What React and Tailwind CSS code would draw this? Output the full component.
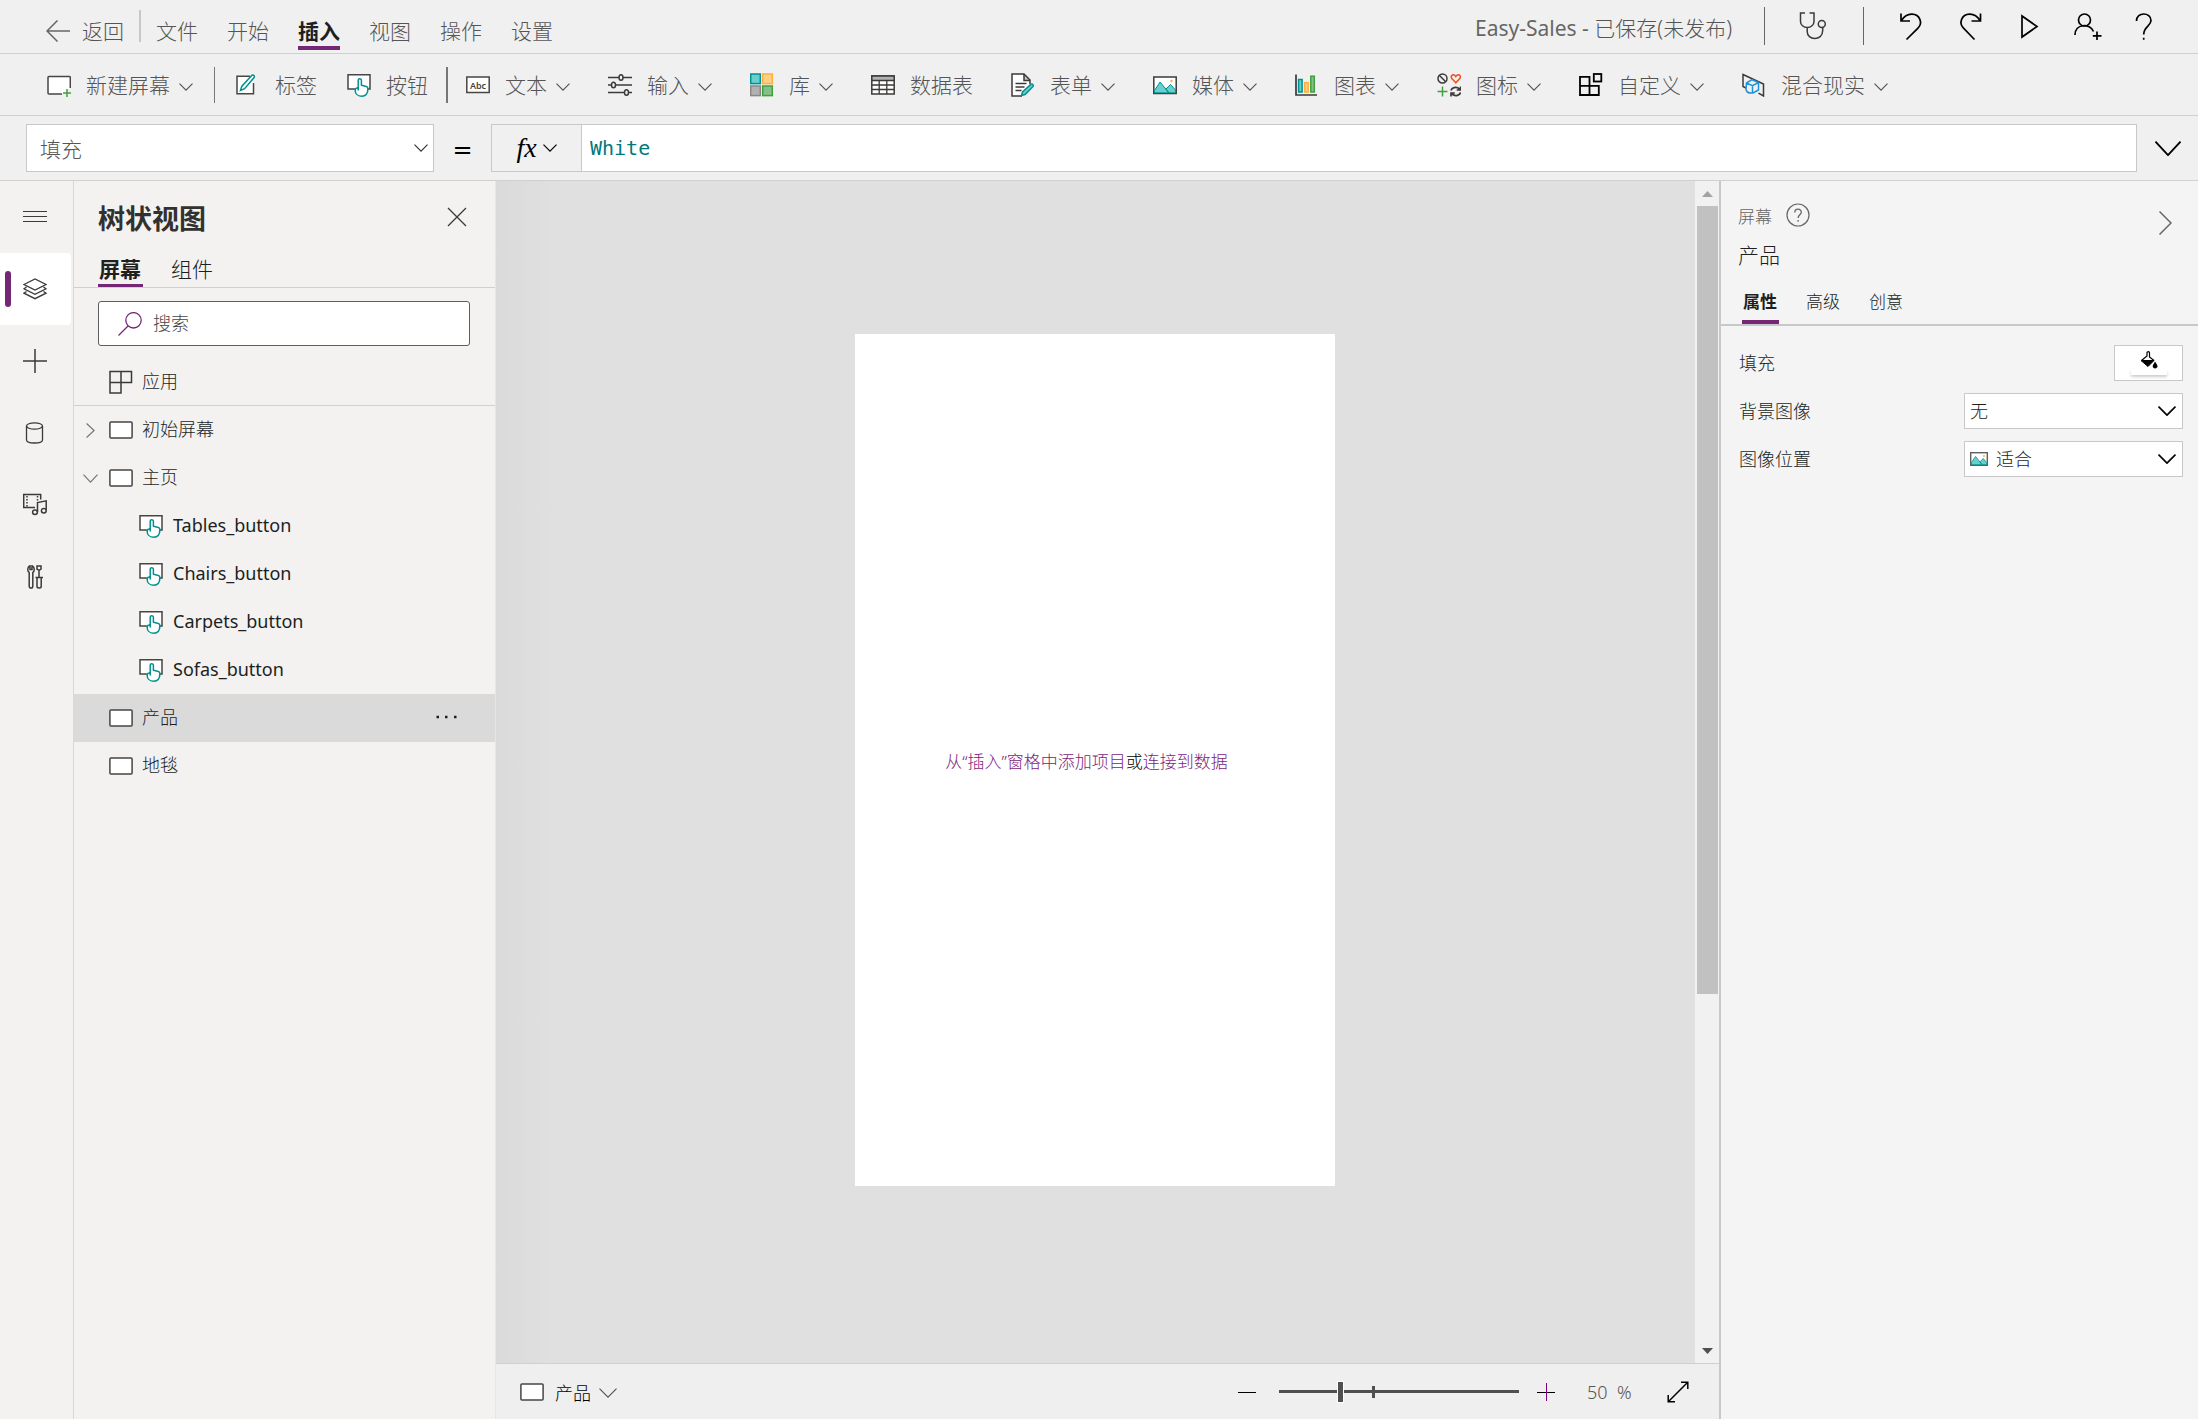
import React from 'react';

/* ---------- icons ---------- */

function Icon({ size = 24, children, className = '' }) {
  return (
    <svg
      width={size}
      height={size}
      viewBox={`0 0 ${size} ${size}`}
      fill="none"
      stroke="#3b3a39"
      strokeWidth="1.5"
      className={`shrink-0 ${className}`}
      aria-hidden="true"
    >
      {children}
    </svg>
  );
}

function Chevron({ className = '', width = 14, height = 8, stroke = 1.2 }) {
  return (
    <svg
      width={width}
      height={height}
      viewBox={`0 0 ${width} ${height}`}
      fill="none"
      stroke="currentColor"
      strokeWidth={stroke}
      className={`shrink-0 ${className}`}
      aria-hidden="true"
    >
      <path d={`M0.5 0.6L${width / 2} ${height - 0.9}L${width - 0.5} 0.6`} />
    </svg>
  );
}

const HAND =
  'M11.2 15.2V7.300a1.600 1.600 0 0 1 3.200 0v5l5 1.200c1.100.3 1.500 1 1.500 2 0 4.600-1.900 7.700-6.300 7.700s-6.400-3-6.400-6c0-1.700 1.200-2.500 3-2z';

function ScreenIcon() {
  return (
    <Icon>
      <rect x="0.9" y="3.9" width="22.2" height="16.2" rx="1" fill="#fff" stroke="#484644" />
    </Icon>
  );
}

function ButtonIcon() {
  return (
    <Icon>
      <path d="M8 16H1V1.800h22V16h-2" fill="#fff" stroke="#484644" />
      <path d={HAND} fill="#fff" stroke="#00908f" strokeLinejoin="round" />
      <path d="M11.2 14v3.500" stroke="#00908f" />
    </Icon>
  );
}

function NewScreenIcon() {
  return (
    <Icon>
      <path d="M15 21H2a1 1 0 0 1-1-1V4.500a1 1 0 0 1 1-1h20.500a.8.8 0 0 1 .8.8V15" fill="#fff" stroke="#484644" />
      <path d="M20 16v8M16 20h8" stroke="#3fa142" />
    </Icon>
  );
}

function LabelIcon() {
  return (
    <Icon>
      <path d="M14 3.200H1v17.500h16.500V10" fill="#fff" stroke="#484644" />
      <path d="M4.500 17.500l1.200-4L15.500 2.700a1.600 1.600 0 0 1 2.600 1.900L8.600 15.700z" fill="#fff" stroke="#00908f" />
    </Icon>
  );
}

function AbcIcon() {
  return (
    <Icon>
      <rect x="0.8" y="4" width="22.4" height="15.500" fill="#fff" stroke="#484644" />
      <text x="12" y="15.500" textAnchor="middle" className="font-['Noto_Sans']" fontSize="9" fontWeight="600" fill="#484644" stroke="none">
        Abc
      </text>
    </Icon>
  );
}

function InputIcon() {
  return (
    <Icon>
      <path d="M0 4.500h11M15 4.500h9M0 12h3.500M7.500 12H24M0 19.500h16.500M20.500 19.500H24" />
      <ellipse cx="13" cy="4.500" rx="2" ry="2.800" />
      <ellipse cx="5.500" cy="12" rx="2" ry="2.800" />
      <ellipse cx="18.500" cy="19.500" rx="2" ry="2.800" />
    </Icon>
  );
}

function GalleryIcon() {
  return (
    <Icon>
      <rect x="0.7" y="1" width="9.600" height="9.600" fill="#69cfce" stroke="#00908f" />
      <rect x="12.700" y="1" width="9.600" height="9.600" fill="#fdd084" stroke="#fbb040" />
      <rect x="0.7" y="13" width="9.600" height="9.600" fill="#b1b1b1" stroke="#8a8886" />
      <rect x="12.700" y="13" width="9.600" height="9.600" fill="#85c187" stroke="#3fa142" />
    </Icon>
  );
}

function TableIcon() {
  return (
    <Icon>
      <rect x="0.8" y="3" width="22.400" height="18" fill="#fff" />
      <rect x="0.8" y="3" width="22.400" height="4.500" fill="#b1b1b1" />
      <path d="M1 12h22M1 16.500h22M8.200 7.500V21M15.800 7.500V21" strokeWidth="1.300" />
    </Icon>
  );
}

function FormIcon() {
  return (
    <Icon>
      <path d="M11 23H1V1h12l6 6v4" fill="#fff" />
      <path d="M13 1v6.500h6" fill="#484644" fillOpacity="0.3" />
      <path d="M4.500 10.500h11M4.500 14h9M4.500 17.500h6" />
      <path d="M10.500 22.500l1-3.500 8.300-7.600c1.500-1 3.300.5 2.200 2.100L14 21.500z" fill="#69cfce" stroke="#00908f" />
    </Icon>
  );
}

function MediaIcon() {
  return (
    <Icon>
      <rect x="0.8" y="4" width="22.400" height="16.500" fill="#fff" />
      <path d="M1.500 19.800V17.500L7 9l9 10.800zM13 16l4.500-4.500 5 5.500v2.800h-7z" fill="#69cfce" stroke="#00908f" strokeWidth="1" />
      <circle cx="18.500" cy="8" r="1.200" fill="#fbb040" stroke="none" />
    </Icon>
  );
}

function ChartIcon() {
  return (
    <Icon>
      <path d="M1 1.500V22h21" strokeWidth="1.700" />
      <rect x="3.600" y="6.500" width="3.500" height="12.500" fill="#69cfce" stroke="#00908f" />
      <rect x="9.700" y="9.700" width="3.500" height="9.300" fill="#fdd084" stroke="#fbb040" />
      <rect x="15.800" y="3.200" width="3.500" height="15.800" fill="#85c187" stroke="#3fa142" />
    </Icon>
  );
}

function SymbolsIcon() {
  return (
    <Icon>
      <circle cx="5.500" cy="5.500" r="4.500" />
      <path d="M2.500 2.500l6 6" />
      <path d="M18.800 9.800l-4-4.200c-1.500-2 .3-4.300 2.300-3.600.8.3 1.300.8 1.700 1.500.4-.7.900-1.200 1.700-1.500 2-.7 3.800 1.600 2.300 3.600z" stroke="#f2511b" />
      <path d="M5.500 13.500v10M0.500 18.500h10" stroke="#3fa142" />
      <path d="M14 17.500c.5-2.500 5-4.500 8.500-1.500M23.500 13.500V17h-3.800M23.500 19.500c-.5 2.500-5 4.500-8.500 1.500M14 23.500V20h3.800" strokeWidth="1.700" />
    </Icon>
  );
}

function CustomIcon() {
  return (
    <Icon>
      <path d="M1 3.800h9.500v9h9.300V22H1zM1 12.800h9.500V22" stroke="#000" strokeWidth="1.800" />
      <rect x="14.800" y="1" width="7.500" height="7.500" stroke="#000" strokeWidth="1.800" />
    </Icon>
  );
}

function RealityIcon() {
  return (
    <Icon>
      <path d="M4 15l-3-1.500V1.500l20.500 9.500v12l-5-2.800" />
      <path d="M4.500 10l5.500-3.300 6.500 2.800v7.500l-5.500 3c-4 .5-6.500-1-7-3.500zM4.500 10l6 2.700 6-3.200M10.500 12.700v7" stroke="#2492d8" />
    </Icon>
  );
}

/* ---------- data ---------- */

const MENU = ['文件', '开始', '插入', '视图', '操作', '设置'];

const INSERT_ITEMS = [
  { label: '文本', icon: AbcIcon, menu: true },
  { label: '输入', icon: InputIcon, menu: true },
  { label: '库', icon: GalleryIcon, menu: true },
  { label: '数据表', icon: TableIcon },
  { label: '表单', icon: FormIcon, menu: true },
  { label: '媒体', icon: MediaIcon, menu: true },
  { label: '图表', icon: ChartIcon, menu: true },
  { label: '图标', icon: SymbolsIcon, menu: true },
  { label: '自定义', icon: CustomIcon, menu: true },
  { label: '混合现实', icon: RealityIcon, menu: true },
];

const TREE = [
  { label: '初始屏幕', open: false },
  { label: '主页', open: true },
  { label: 'Tables_button', child: true },
  { label: 'Chairs_button', child: true },
  { label: 'Carpets_button', child: true },
  { label: 'Sofas_button', child: true },
  { label: '产品', selected: true },
  { label: '地毯' },
];

/* ---------- header ---------- */

function TopBar() {
  return (
    <header className="flex h-[54px] shrink-0 border-b border-[#d0d0d0] pl-[46px] pr-[37px] text-[21px] leading-[30px] text-[#555]">
      <button className="flex h-[46px] items-center gap-3 pt-4">
        <svg width="24" height="22" viewBox="0 0 24 22" fill="none" stroke="#666" strokeWidth="1.500" aria-hidden="true">
          <path d="M24 11H1M11.500 0.500L1 11l10.500 10.500" />
        </svg>
        返回
      </button>
      <div className="ml-[15px] mt-2.5 h-8 w-0.5 bg-[#c8c8c8]" />
      <nav className="ml-[15px] flex gap-[29px]">
        {MENU.map((item) => (
          <button
            key={item}
            className={
              item === '插入'
                ? 'h-[50px] border-b-4 border-[#742774] pt-4 font-bold text-[#201f1e]'
                : 'h-[50px] border-b-4 border-transparent pt-4'
            }
          >
            {item}
          </button>
        ))}
      </nav>

      <div className="ml-auto flex h-[52px] items-center">
        <span className="pt-1">
          <span className="font-normal text-[#666]">Easy-Sales - </span>已保存(未发布)
        </span>
        <div className="ml-8 h-[38px] w-px bg-[#666]" />
        <button className="ml-[34px]" aria-label="应用检查器">
          <Icon size={28}>
            <path d="M6 1H1.500v8.500a6.700 6 0 0 0 13.500 0V1h-4.500M8.200 15.500v4c0 4.500 3.500 7 7.500 7s8-2.500 8-8v-3" />
            <circle cx="22.800" cy="12" r="3.500" />
          </Icon>
        </button>
        <div className="ml-9 h-[38px] w-px bg-[#666]" />
        <div className="ml-[33px] flex gap-[31px] pt-px">
          <button aria-label="撤消">
            <Icon size={28}>
              <path d="M4 0.500V8h9M4.300 7.700C7 3.500 10.500 1 15 1.200c8 .3 11 9 6 14L9.500 26.500" stroke="#000" strokeWidth="1.700" />
            </Icon>
          </button>
          <button aria-label="恢复">
            <Icon size={28}>
              <path d="M24.500 0.500V8h-9M24.200 7.700C21.500 3.500 18 1 13.500 1.200c-8 .3-11 9-6 14L18.500 26.500" stroke="#000" strokeWidth="1.700" />
            </Icon>
          </button>
          <button aria-label="预览应用">
            <Icon size={28}>
              <path d="M7 3v21l15-10.500z" stroke="#000" strokeWidth="1.700" />
            </Icon>
          </button>
          <button aria-label="共享">
            <Icon size={28}>
              <circle cx="10.500" cy="7" r="6" stroke="#000" strokeWidth="1.700" />
              <path d="M1 22c0-11.500 15-12 18.500-3.500M23 18.500V27M18.800 22.800h8.700" stroke="#000" strokeWidth="1.700" />
            </Icon>
          </button>
          <button aria-label="帮助">
            <Icon size={28}>
              <path d="M3.500 8C3.500-1.500 18-1 18 7.500c0 5.500-7.300 6-7.300 14M10.700 24.800v2" stroke="#000" strokeWidth="1.700" />
            </Icon>
          </button>
        </div>
      </div>
    </header>
  );
}

function ToolButton({ label, icon: Glyph, menu }) {
  return (
    <button className="flex items-center whitespace-nowrap">
      <Glyph />
      <span className="ml-[15px] pt-px">{label}</span>
      {menu && <Chevron className="ml-[9px] mt-1" />}
    </button>
  );
}

function Toolbar() {
  return (
    <div className="flex h-[62px] shrink-0 items-center border-b border-[#d0d0d0] pl-[47px] text-[21px] leading-[30px] text-[#555]">
      <ToolButton label="新建屏幕" icon={NewScreenIcon} menu />
      <div className="mx-[21px] h-9 w-px bg-[#777]" />
      <div className="flex gap-[30px]">
        <ToolButton label="标签" icon={LabelIcon} />
        <ToolButton label="按钮" icon={ButtonIcon} />
      </div>
      <div className="mx-[18px] h-9 w-0.5 bg-[#777]" />
      <div className="flex gap-[38px]">
        {INSERT_ITEMS.map((item) => (
          <ToolButton key={item.label} {...item} />
        ))}
      </div>
    </div>
  );
}

function FormulaBar() {
  return (
    <div className="flex h-[65px] shrink-0 items-center border-b border-[#d0d0d0] pl-[26px]">
      <div className="relative">
        <select aria-label="属性" className="h-12 w-[408px] appearance-none border border-[#c8c8c8] bg-white pl-[13px] pt-1 text-[21px] font-light text-[#555]">
          <option>填充</option>
        </select>
        <Chevron className="pointer-events-none absolute right-[6px] top-5 text-[#333]" />
      </div>
      <span className="w-[57px] pt-1 text-center font-['DejaVu_Sans'] text-[24px] font-normal text-black">=</span>
      <button className="flex h-12 w-[90px] items-center justify-center gap-1.5 border border-r-0 border-[#c8c8c8] text-black">
        <span className="font-['Liberation_Serif'] text-[28px] leading-none italic">fx</span>
        <Chevron />
      </button>
      <input
        aria-label="公式"
        defaultValue="White"
        className="h-12 min-w-0 flex-1 border border-[#c8c8c8] bg-white pl-2 font-['DejaVu_Sans_Mono'] text-[20px] font-normal text-[#00797a]"
      />
      <button className="flex h-12 w-[61px] items-center justify-center text-black" aria-label="展开公式栏">
        <Chevron width={26} height={15} stroke={1.8} />
      </button>
    </div>
  );
}

/* ---------- left side ---------- */

function RailButton({ label, active, children }) {
  return (
    <button
      aria-label={label}
      className={
        active
          ? 'relative flex h-[72px] items-center justify-center rounded-r bg-white pr-0.5'
          : 'flex h-[72px] items-center justify-center pr-0.5'
      }
    >
      {active && <span className="absolute left-[5px] h-9 w-1.5 rounded-full bg-[#742774]" />}
      <Icon>{children}</Icon>
    </button>
  );
}

function Rail() {
  return (
    <nav className="flex w-[74px] shrink-0 flex-col border-r border-[#d8d8d8] bg-[#f3f2f1] pr-0.5">
      <RailButton label="菜单">
        <path d="M0 6.500h24M0 11.500h24M0 16.500h24" strokeWidth="1" />
      </RailButton>
      <RailButton label="树状视图" active>
        <path d="M1 7.500L12 2l11 5.500L12 13zM3.500 10L1 11.800l11 5.500 11-5.500-2.500-1.800M3.500 14.500L1 16.200l11 5.500 11-5.500-2.500-1.700" strokeWidth="1.300" />
      </RailButton>
      <RailButton label="插入">
        <path d="M12 0v24M0 12h24" />
      </RailButton>
      <RailButton label="数据">
        <ellipse cx="11.500" cy="5" rx="8" ry="3.200" strokeWidth="1.300" />
        <path d="M3.500 5v14c0 4 16 4 16 0V5" strokeWidth="1.300" />
      </RailButton>
      <RailButton label="媒体">
        <path d="M12 14.500H0.700v-13h17v5" />
        <path d="M4 3v11M14.500 3v5" strokeDasharray="1.500 1.500" />
        <path d="M14.500 19V9.500l8.700-1.700v9.500" />
        <ellipse cx="12" cy="19.200" rx="2.400" ry="2.200" />
        <ellipse cx="20.800" cy="17.800" rx="2.400" ry="2.200" />
      </RailButton>
      <RailButton label="高级工具">
        <path d="M7 0.800v3.700h2V0.800c2.800 1 2.800 5.200.8 6.700v13.800c0 2.400-3.600 2.400-3.600 0V7.500C4.200 6 4.200 1.800 7 0.800zM14 1h4v3.200l-2 1.200-2-1.200zM16 5.400V12M12.500 12.500h7.500M14 12.500v9c0 2 4.200 2 4.200 0v-9" strokeWidth="1.500" />
      </RailButton>
    </nav>
  );
}

function TreeRow({ label, open, child, selected }) {
  if (child) {
    return (
      <li className="flex h-12 items-center gap-2.5 pl-[65px]">
        <ButtonIcon />
        <span className="pb-0.5 font-normal">{label}</span>
      </li>
    );
  }
  return (
    <li className={selected ? 'flex h-12 items-center bg-[#dadada] pl-[9px] pr-[37px]' : 'flex h-12 items-center pl-[9px] pr-[37px]'}>
      <span className="mr-[11px] flex w-[15px] justify-center text-[#777]">
        {open !== undefined && <Chevron width={15} height={9} className={open ? '' : '-rotate-90'} />}
      </span>
      <ScreenIcon />
      <span className="ml-[9px] pb-0.5">{label}</span>
      {selected && (
        <button className="ml-auto pb-0.5" aria-label="更多">
          <Icon>
            <path d="M2.500 12H5M11 12h2.500M20 12h2.500" stroke="#201f1e" strokeWidth="2.500" />
          </Icon>
        </button>
      )}
    </li>
  );
}

function TreePanel() {
  return (
    <aside className="w-[422px] shrink-0 border-r border-[#e6e6e6] bg-[#f3f2f1] text-[18px] leading-[26px] text-[#201f1e]">
      <div className="flex h-[72px] items-center justify-between pl-6 pr-7">
        <h2 className="pt-1 text-[27px] leading-9 font-bold text-[#323130]">树状视图</h2>
        <button aria-label="关闭">
          <Icon size={20}>
            <path d="M1 1l18 18M19 1L1 19" strokeWidth="1.300" />
          </Icon>
        </button>
      </div>
      <div className="flex h-[35px] border-b border-[#d0d0d0] pl-6 text-[21px] leading-8">
        <button className="w-[45px] border-b-[3px] border-[#742774] pl-px text-left font-bold">屏幕</button>
        <button className="ml-7 border-b-[3px] border-transparent">组件</button>
      </div>
      <label className="ml-6 mr-[25px] mt-[13px] flex h-[45px] items-center rounded-[3px] border border-[#605e5c] bg-white pl-[19px]">
        <Icon>
          <circle cx="15.500" cy="8.300" r="7.700" stroke="#742774" strokeWidth="1.300" />
          <path d="M10 14L0.500 23.500" stroke="#742774" strokeWidth="1.300" />
        </Icon>
        <input
          placeholder="搜索"
          aria-label="搜索"
          className="ml-[11px] min-w-0 flex-1 bg-transparent pb-0.5 font-light placeholder:text-[#484644]"
        />
      </label>
      <div className="mt-3 flex h-12 items-center border-b border-[#d0d0d0] pl-[35px]">
        <Icon>
          <path d="M1 1.500h21.500v11H12V23H1zM12 1.500v11H1" />
        </Icon>
        <span className="ml-[9px] pb-0.5">应用</span>
      </div>
      <ul>
        {TREE.map((row) => (
          <TreeRow key={row.label} {...row} />
        ))}
      </ul>
    </aside>
  );
}

/* ---------- canvas ---------- */

function Canvas() {
  return (
    <main className="flex min-w-0 flex-1 flex-col">
      <div className="flex min-h-0 flex-1">
        <div className="flex flex-1 items-center justify-center bg-linear-to-r from-[#dadada] to-[#e0e0e0] to-5% pr-0.5 pb-6">
          <div className="flex h-[852px] w-[480px] items-center justify-center bg-white pr-4 pt-1 text-[17px] leading-6">
            <p>
              <a href="#insert" className="text-[#7d1c7d]">从“插入”窗格中添加项目</a>
              <span className="text-black">或</span>
              <a href="#data" className="text-[#7d1c7d]">连接到数据</a>
            </p>
          </div>
        </div>
        <div className="flex w-6 flex-col items-center bg-[#f1f1f1] pl-0.5 pr-px">
          <svg width="11" height="25" viewBox="0 0 11 25" fill="#a3a3a3" aria-hidden="true">
            <path d="M0 16l5.500-6 5.500 6z" />
          </svg>
          <div className="h-2/3 w-full bg-[#c1c1c1]" />
          <svg width="11" height="25" viewBox="0 0 11 25" fill="#505050" className="mt-auto" aria-hidden="true">
            <path d="M0 10l5.500 6 5.500-6z" />
          </svg>
        </div>
      </div>

      <footer className="flex h-14 shrink-0 items-center border-t border-[#d0d0d0] bg-[#efefef] pl-6 pr-[30px] text-[18px] leading-[26px]">
        <button className="flex items-center text-black">
          <ScreenIcon />
          <span className="ml-[11px] pt-0.5">产品</span>
          <Chevron width={18} height={10} className="ml-2 mt-0.5 text-[#555]" />
        </button>
        <div className="ml-auto flex items-center">
          <button aria-label="缩小">
            <Icon size={18}>
              <path d="M0 9.500h18" stroke="#000" strokeWidth="1" />
            </Icon>
          </button>
          <div className="relative ml-[23px] flex h-6 w-60 items-center">
            <span className="absolute left-[93px] h-3 w-[3px] bg-[#505050]" />
            <input
              type="range"
              min="0"
              max="200"
              defaultValue="50"
              aria-label="缩放"
              className="h-[3px] w-full appearance-none bg-[#505050] [&::-webkit-slider-thumb]:h-[22px] [&::-webkit-slider-thumb]:w-[7px] [&::-webkit-slider-thumb]:appearance-none [&::-webkit-slider-thumb]:border [&::-webkit-slider-thumb]:border-white [&::-webkit-slider-thumb]:bg-[#505050]"
            />
          </div>
          <button className="ml-[18px]" aria-label="放大">
            <Icon size={18}>
              <path d="M0 9.500h18" stroke="#000" strokeWidth="1" />
              <path d="M9.500 0v18" stroke="#800080" strokeWidth="1" />
            </Icon>
          </button>
          <span className="ml-8 w-[30px] text-[#555]">50</span>
          <span className="w-5 text-[#555]">%</span>
          <button className="ml-[30px]" aria-label="适应窗口">
            <Icon size={22}>
              <path d="M1.500 20.500l19-19M14 1.200h6.800V8M1.200 14v6.800H8" stroke="#000" />
            </Icon>
          </button>
        </div>
      </footer>
    </main>
  );
}

/* ---------- properties ---------- */

function PropertyRow({ label, htmlFor, children }) {
  return (
    <div className="flex h-12 items-center justify-between">
      <label htmlFor={htmlFor}>{label}</label>
      {children}
    </div>
  );
}

function PropertiesPanel() {
  return (
    <aside className="w-[479px] shrink-0 border-l-2 border-[#c8c8c8] bg-[#f4f4f4] text-[#201f1e]">
      <div className="flex justify-between border-b-2 border-[#c8c8c8] pl-[17px] pr-[26px] pt-5">
        <div>
          <div className="flex h-8 items-center gap-[14px] text-[17px] leading-6 text-[#666]">
            <span>屏幕</span>
            <button className="pb-1" aria-label="帮助">
              <Icon size={24}>
                <circle cx="12" cy="12" r="11" stroke="#666" strokeWidth="1.200" />
                <path d="M8.800 9.500c0-4.500 6.500-4.300 6.500-.3 0 2.500-3.200 2.800-3.200 5.800M12.100 17v1.800" stroke="#666" strokeWidth="1.300" />
              </Icon>
            </button>
          </div>
          <h3 className="flex h-[46px] items-center pb-0.5 text-[21px] leading-[30px]">产品</h3>
          <div className="ml-1 flex h-[45px] gap-[26px] text-[17px] leading-6">
            <button className="w-[37px] border-b-4 border-[#742774] pl-px pt-1 text-left font-bold">属性</button>
            <button className="w-[37px] border-b-4 border-transparent pl-px pt-1 text-left">高级</button>
            <button className="w-[37px] border-b-4 border-transparent pl-px pt-1 text-left">创意</button>
          </div>
        </div>
        <button className="mt-2.5 self-start" aria-label="折叠">
          <svg width="13" height="24" viewBox="0 0 13 24" fill="none" stroke="#666" strokeWidth="1.500" aria-hidden="true">
            <path d="M0.500 0.500L12 12L0.500 23.500" />
          </svg>
        </button>
      </div>
      <div className="pl-[18px] pr-[15px] pt-[13px] text-[18px] leading-[26px]">
        <PropertyRow label="填充" htmlFor="fill">
          <button id="fill" className="flex h-9 w-[69px] flex-col items-center border border-[#c8c8c8] bg-white pt-[5px]">
            <Icon size={18}>
              <path d="M1 9.500h13l-6 6z" fill="#000" stroke="#000" strokeWidth="1" />
              <path d="M1.500 9.500L7 5V1.800c0-1.500 2.500-1.500 2.500 0V6l4.500 3.500" stroke="#000" strokeWidth="1.200" />
              <path d="M15 10.500c1.300 2 2.500 3.500 2.500 4.800 0 2.800-4.800 2.800-4.800 0 0-1.300 1.200-2.800 2.300-4.800z" fill="#000" stroke="none" />
            </Icon>
            <span className="h-1.5 w-9 bg-white shadow-[0_2px_3px_rgba(0,0,0,0.2)]" />
          </button>
        </PropertyRow>
        <PropertyRow label="背景图像" htmlFor="background">
          <div className="relative">
            <select id="background" className="h-9 w-[219px] appearance-none border border-[#c8c8c8] bg-white pl-[5px] font-light">
              <option>无</option>
            </select>
            <Chevron width={18} height={10} stroke={1.7} className="pointer-events-none absolute right-[7px] top-[13px] text-black" />
          </div>
        </PropertyRow>
        <PropertyRow label="图像位置" htmlFor="position">
          <div className="relative">
            <select id="position" className="h-9 w-[219px] appearance-none border border-[#c8c8c8] bg-white pl-[31px] font-light">
              <option>适合</option>
            </select>
            <svg width="18" height="14" viewBox="0 0 18 14" fill="none" className="pointer-events-none absolute left-1.5 top-[11px]" aria-hidden="true">
              <rect x="0.700" y="0.700" width="16.600" height="12.600" fill="#fff" stroke="#605e5c" strokeWidth="1.400" />
              <path d="M1.400 10.500l4.200-6L12 12.600H1.400zM10 10l3.200-3.500 3.400 4v2.100h-4.500z" fill="#69cfce" stroke="#00908f" strokeWidth="0.800" />
              <circle cx="14" cy="4" r="1" fill="#fbb040" />
            </svg>
            <Chevron width={18} height={10} stroke={1.7} className="pointer-events-none absolute right-[7px] top-[13px] text-black" />
          </div>
        </PropertyRow>
      </div>
    </aside>
  );
}

export default function App() {
  return (
    <div className="flex h-screen flex-col overflow-hidden bg-[#f0f0f0] font-['Noto_Sans','Noto_Sans_CJK_SC',sans-serif] font-light">
      <TopBar />
      <Toolbar />
      <FormulaBar />
      <div className="flex min-h-0 flex-1">
        <Rail />
        <TreePanel />
        <Canvas />
        <PropertiesPanel />
      </div>
    </div>
  );
}
